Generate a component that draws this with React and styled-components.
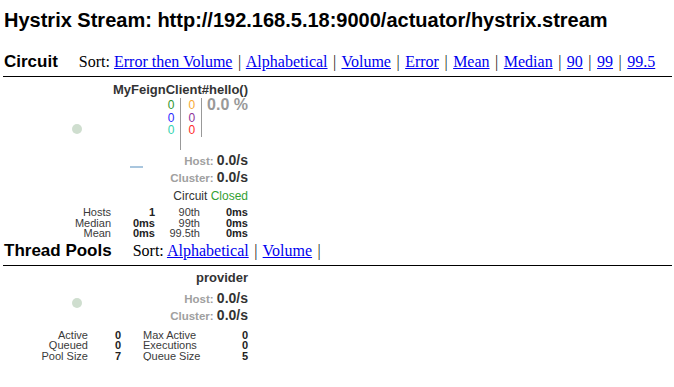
import styled, { createGlobalStyle } from 'styled-components'

const GlobalStyle = createGlobalStyle`
  body {
    margin: 0;
    background: #fff;
    font-family: "Liberation Sans", Arial, sans-serif;
  }
`

const Page = styled.div`
  padding: 8px 2px 0 3px;
`

const Title = styled.h2`
  margin: 0;
  padding-left: 1px;
  font-size: 20px;
  line-height: 24px;
  font-weight: bold;
  color: #000;
`

const MenuBar = styled.div`
  display: flex;
  align-items: baseline;
  margin-top: ${p => p.$top}px;
  padding: 0 0 2px 1px;
  border-bottom: 1px solid #000;
  line-height: 24px;
`

const MenuTitle = styled.div`
  font-size: 17px;
  font-weight: bold;
  color: #000;
`

const Sort = styled.div`
  margin-left: 21px;
  font-family: "Liberation Serif", "Times New Roman", serif;
  font-size: 16px;
  color: #000;
  white-space: pre;
`

const SortLink = styled.a`
  color: #0000ee;
  text-decoration: underline;
  cursor: pointer;
`

const Sep = styled.span`
  margin: 0 1.5px;
  color: #222;
`

const Monitor = styled.div`
  width: 245px;
  padding-top: ${p => p.$top}px;
  color: #333;
`

const Top = styled.div`
  display: grid;
`

const Chart = styled.svg`
  grid-area: 1 / 1;
  display: block;
`

const Info = styled.div`
  grid-area: 1 / 1;
  display: flex;
  flex-direction: column;
  align-items: flex-end;
`

const Name = styled.div`
  font-size: 13px;
  line-height: 17px;
  font-weight: bold;
  color: #333;
`

const Counters = styled.div`
  display: flex;
  align-items: flex-start;
`

const CountCol = styled.div`
  height: ${p => p.$h}px;
  padding: 1px 6px 0 ${p => p.$left}px;
  box-sizing: border-box;
  border-right: 1px solid #999;
  font-size: 12px;
  line-height: 12.5px;
  text-align: right;
`

const Count = styled.div`
  color: ${p => p.$color};
`

const Rate = styled.div`
  padding-left: 5px;
  font-size: 16px;
  line-height: 14px;
  font-weight: bold;
  color: #999;
`

const RateRow = styled.div`
  margin-top: ${p => p.$top || 0}px;
  line-height: 16px;
  white-space: nowrap;
`

const RateLabel = styled.span`
  font-size: 11.5px;
  font-weight: bold;
  color: #a0a0a0;
`

const RateValue = styled.span`
  font-size: 14px;
  font-weight: bold;
  color: #333;
`

const CircuitStatus = styled.div`
  margin-top: 2px;
  font-size: 12px;
  line-height: 16px;
  color: #333;
`

const Closed = styled.span`
  color: #33a033;
`

const Stats = styled.div`
  display: grid;
  grid-template-columns: ${p => p.$cols};
  margin-top: ${p => p.$top}px;
  font-size: 11px;
  line-height: 10.5px;
`

const Cell = styled.div`
  text-align: ${p => (p.$left ? 'left' : 'right')};
  padding-left: ${p => p.$pad || 0}px;
  font-weight: ${p => (p.$value ? 'bold' : 'normal')};
  color: ${p => (p.$value ? '#222' : '#3a3a3a')};
  white-space: nowrap;
`

const circuitSorts = ['Error then Volume', 'Alphabetical', 'Volume', 'Error', 'Mean', 'Median', '90', '99', '99.5']
const poolSorts = ['Alphabetical', 'Volume']

const circuitStats = [
  ['Hosts', '1', '90th', '0ms'],
  ['Median', '0ms', '99th', '0ms'],
  ['Mean', '0ms', '99.5th', '0ms'],
]

const poolStats = [
  ['Active', '0', 'Max Active', '0'],
  ['Queued', '0', 'Executions', '0'],
  ['Pool Size', '7', 'Queue Size', '5'],
]

function SortMenu({ items, trailing }) {
  return (
    <Sort>
      Sort:{' '}
      {items.map((item, i) => (
        <span key={item}>
          <SortLink>{item}</SortLink>
          {(i < items.length - 1 || trailing) && (
            <>
              {' '}
              <Sep>|</Sep>{' '}
            </>
          )}
        </span>
      ))}
    </Sort>
  )
}

function RateLine({ label, top }) {
  return (
    <RateRow $top={top}>
      <RateLabel>{label}: </RateLabel>
      <RateValue>0.0/s</RateValue>
    </RateRow>
  )
}

function App() {
  return (
    <>
      <GlobalStyle />
      <Page>
        <Title>Hystrix Stream: http://192.168.5.18:9000/actuator/hystrix.stream</Title>

        <MenuBar $top={18}>
          <MenuTitle>Circuit</MenuTitle>
          <SortMenu items={circuitSorts} />
        </MenuBar>

        <Monitor $top={4}>
          <Top>
            <Chart width="245" height="100">
              <circle cx="74" cy="48" r="5" fill="#cfdecf" />
              <line x1="127" y1="86" x2="140" y2="86" stroke="#a9c6de" strokeWidth="2" />
            </Chart>
            <Info>
              <Name>MyFeignClient#hello()</Name>
              <Counters>
                <CountCol $h={52} $left={0}>
                  <Count $color="#2f962f">0</Count>
                  <Count $color="#2a2aff">0</Count>
                  <Count $color="#33d2b0">0</Count>
                </CountCol>
                <CountCol $h={39} $left={7}>
                  <Count $color="#f7a833">0</Count>
                  <Count $color="#8e3399">0</Count>
                  <Count $color="#ff2a2a">0</Count>
                </CountCol>
                <Rate>0.0 %</Rate>
              </Counters>
              <RateLine label="Host" top={2} />
              <RateLine label="Cluster" />
              <CircuitStatus>
                Circuit <Closed>Closed</Closed>
              </CircuitStatus>
            </Info>
          </Top>
          <Stats $cols="108px 44px 45px 48px" $top={3}>
            {circuitStats.map(row =>
              row.map((v, i) => (
                <Cell key={row[0] + i} $value={i % 2 === 1}>
                  {v}
                </Cell>
              ))
            )}
          </Stats>
        </Monitor>

        <MenuBar $top={0}>
          <MenuTitle>Thread Pools</MenuTitle>
          <SortMenu items={poolSorts} trailing />
        </MenuBar>

        <Monitor $top={3}>
          <Top>
            <Chart width="245" height="60">
              <circle cx="74" cy="34" r="5" fill="#cfdecf" />
            </Chart>
            <Info>
              <Name>provider</Name>
              <RateLine label="Host" top={4} />
              <RateLine label="Cluster" />
            </Info>
          </Top>
          <Stats $cols="85px 33px 92px 35px" $top={1}>
            {poolStats.map(row =>
              row.map((v, i) => (
                <Cell key={row[0] + i} $value={i % 2 === 1} $left={i === 2} $pad={i === 2 ? 22 : 0}>
                  {v}
                </Cell>
              ))
            )}
          </Stats>
        </Monitor>
      </Page>
    </>
  )
}

export default App
